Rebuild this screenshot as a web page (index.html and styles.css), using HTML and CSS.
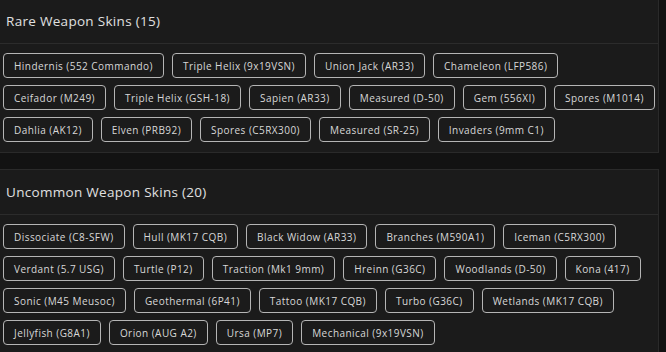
FILE: index.html
```html
<!DOCTYPE html>
<html lang="en">

<head>
    <meta charset="UTF-8">
    <title>Weapon Skins</title>
    <link rel="stylesheet" href="styles.css">
</head>

<body>
    <div class="skin-panel first">
        <div class="panel-head">
            <h3>Rare Weapon Skins (15)</h3>
        </div>
        <div class="skin-list">
            <div class="skin">Hindernis (552 Commando)</div>
            <div class="skin">Triple Helix (9x19VSN)</div>
            <div class="skin">Union Jack (AR33)</div>
            <div class="skin">Chameleon (LFP586)</div>
            <div class="skin">Ceifador (M249)</div>
            <div class="skin">Triple Helix (GSH-18)</div>
            <div class="skin">Sapien (AR33)</div>
            <div class="skin">Measured (D-50)</div>
            <div class="skin">Gem (556XI)</div>
            <div class="skin">Spores (M1014)</div>
            <div class="skin">Dahlia (AK12)</div>
            <div class="skin">Elven (PRB92)</div>
            <div class="skin">Spores (C5RX300)</div>
            <div class="skin">Measured (SR-25)</div>
            <div class="skin">Invaders (9mm C1)</div>
        </div>
    </div>

    <div class="skin-panel">
        <div class="panel-head">
            <h3>Uncommon Weapon Skins (20)</h3>
        </div>
        <div class="skin-list">
            <div class="skin">Dissociate (C8-SFW)</div>
            <div class="skin">Hull (MK17 CQB)</div>
            <div class="skin">Black Widow (AR33)</div>
            <div class="skin">Branches (M590A1)</div>
            <div class="skin">Iceman (C5RX300)</div>
            <div class="skin">Verdant (5.7 USG)</div>
            <div class="skin">Turtle (P12)</div>
            <div class="skin">Traction (Mk1 9mm)</div>
            <div class="skin">Hreinn (G36C)</div>
            <div class="skin">Woodlands (D-50)</div>
            <div class="skin">Kona (417)</div>
            <div class="skin">Sonic (M45 Meusoc)</div>
            <div class="skin">Geothermal (6P41)</div>
            <div class="skin">Tattoo (MK17 CQB)</div>
            <div class="skin">Turbo (G36C)</div>
            <div class="skin">Wetlands (MK17 CQB)</div>
            <div class="skin">Jellyfish (G8A1)</div>
            <div class="skin">Orion (AUG A2)</div>
            <div class="skin">Ursa (MP7)</div>
            <div class="skin">Mechanical (9x19VSN)</div>
        </div>
    </div>
</body>

</html>
```

FILE: styles.css
```css
body {
    margin: 0;
    background: #121212;
    font-family: 'Open Sans', sans-serif;
    color: #dcdcdc;
    overflow: hidden;
}

.skin-panel {
    width: 660px;
    margin-left: -1px;
    margin-bottom: 16px;
    background: #1b1b1b;
    border: 1px solid #2a2a2a;
    box-sizing: border-box;
}

.skin-panel.first {
    margin-top: -2px;
}

.panel-head {
    height: 45px;
    display: flex;
    align-items: center;
    padding-left: 6px;
    border-bottom: 1px solid #2c2c2c;
    box-sizing: border-box;
}

.panel-head h3 {
    margin: 0;
    font-size: 13.5px;
    font-weight: normal;
    letter-spacing: 0.3px;
    color: #e0e0e0;
}

.skin-list {
    display: flex;
    flex-wrap: wrap;
    gap: 7px 8px;
    padding: 9px 2px 10px 3px;
}

.skin {
    height: 25px;
    display: flex;
    align-items: center;
    padding: 0 10px;
    border: 1px solid #b5b5b5;
    border-radius: 4px;
    box-sizing: border-box;
    font-size: 10px;
    letter-spacing: 0.45px;
    color: #d8d8d8;
    white-space: nowrap;
}
```
